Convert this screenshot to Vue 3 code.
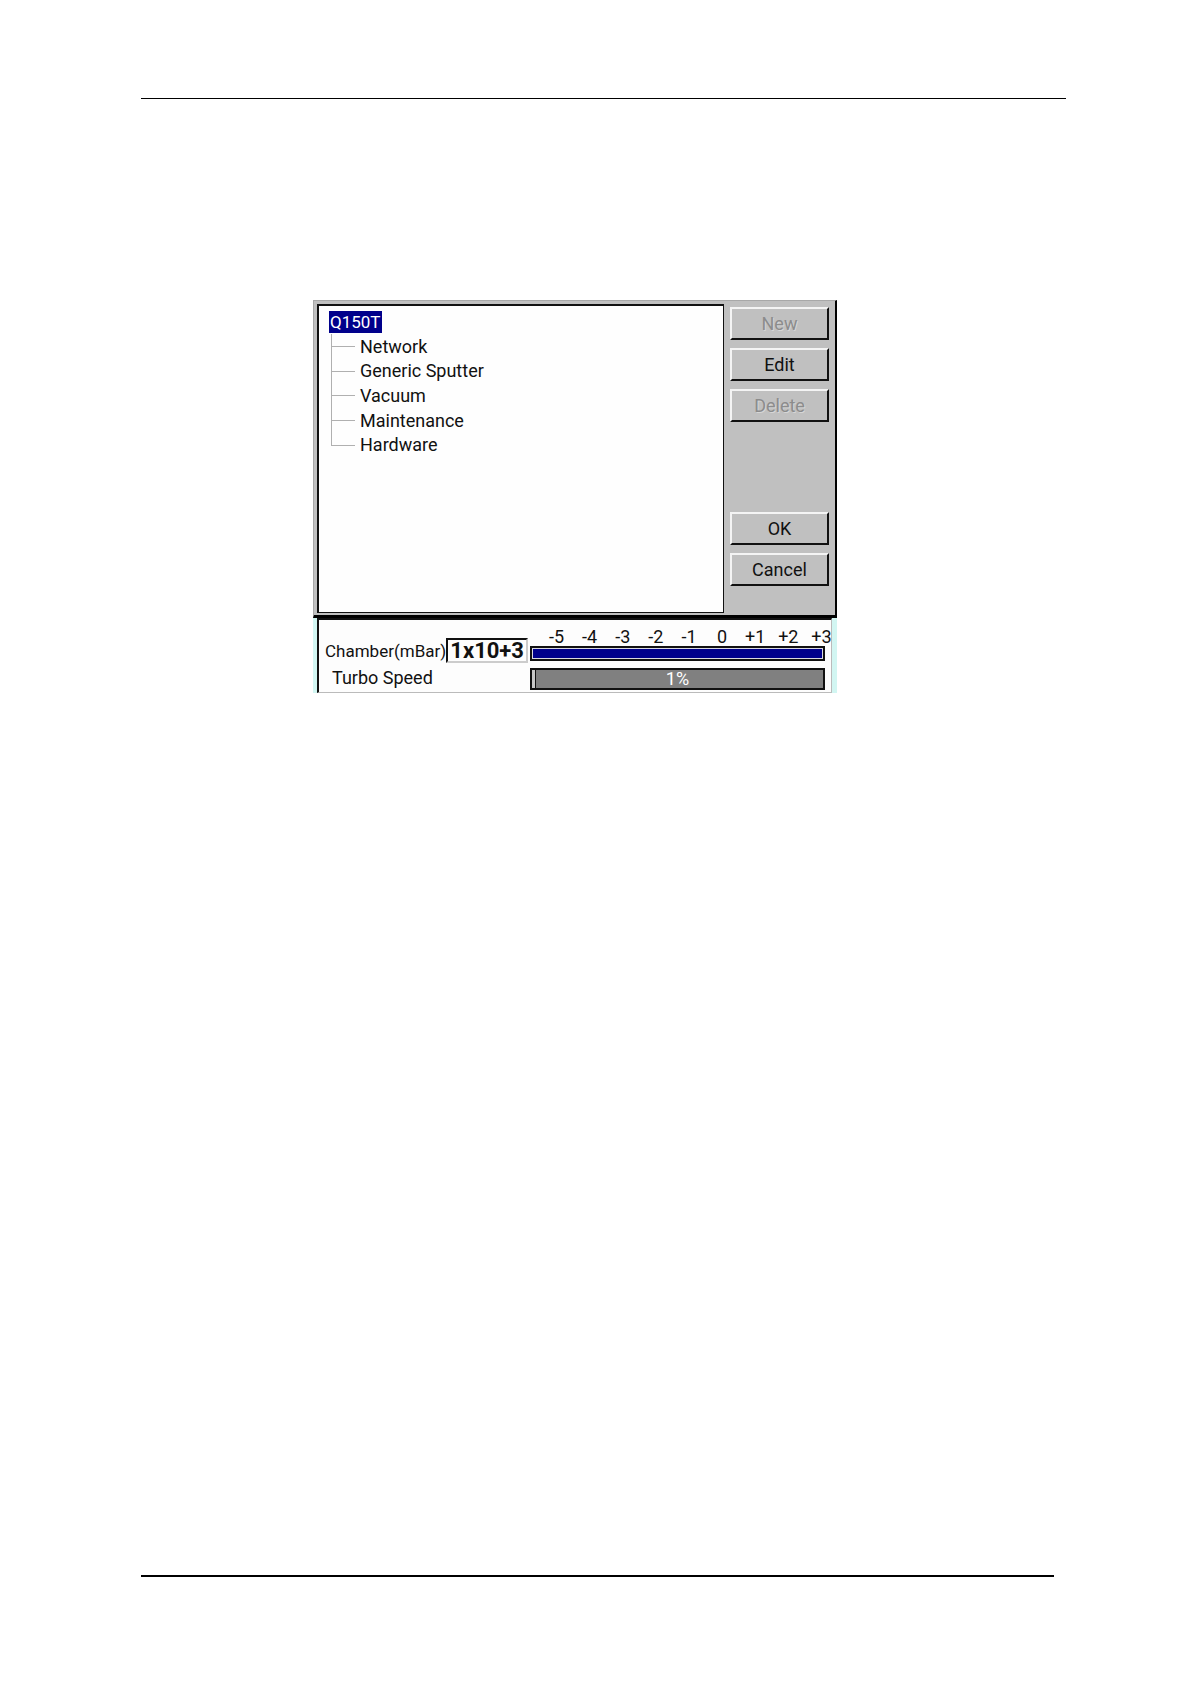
<template>
<div class="page">
<hr class="rule top" />

<div class="panel">
<div class="dialog">
<div class="tree">
<span class="root">{{ root }}</span>
<ul class="nodes">
<li v-for="node in nodes" :key="node">{{ node }}</li>
</ul>
</div>

<div class="buttons">
<button type="button" disabled>New</button>
<button type="button">Edit</button>
<button type="button" disabled>Delete</button>
<button type="button" class="ok">OK</button>
<button type="button">Cancel</button>
</div>
</div>

<div class="status">
<div class="inner">
<div class="readings">
<div class="chamber">
<label for="chamber">Chamber(mBar)</label>
<input id="chamber" type="text" v-model="pressure" readonly />
</div>
<div class="turbo">Turbo Speed</div>
</div>

<div class="gauges">
<div class="scale">
<span v-for="mark in marks" :key="mark">{{ mark }}</span>
</div>
<div class="gauge vacuum"><div class="fill" :style="{ width: vacuum + '%' }"></div></div>
<div class="gauge speed">
<div class="fill" :style="{ width: speed + '%' }"></div>
<span class="percent">{{ speed }}%</span>
</div>
</div>
</div>
</div>
</div>

<hr class="rule bottom" />
</div>
</template>

<script setup>
import { ref } from 'vue'

const root = 'Q150T'
const nodes = ['Network', 'Generic Sputter', 'Vacuum', 'Maintenance', 'Hardware']
const marks = ['-5', '-4', '-3', '-2', '-1', '0', '+1', '+2', '+3']

const pressure = ref('1x10+3')
const vacuum = ref(100)
const speed = ref(1)
</script>

<style>
body { margin:0; background:#fff }
</style>

<style scoped>
.page { box-sizing:border-box; min-height:100vh; display:flex; flex-direction:column; padding:98px 124px 107px 141px; font-family:Roboto, "Liberation Sans", Arial, sans-serif; font-size:18px; color:#111 }
.rule { width:100%; margin:0; border:0; background:#000 }
.top { height:1px }
.bottom { height:2px; width:auto; margin:auto 12px 0 0 }

.panel { width:100%; max-width:524px; margin:201px 0 40px 172px }
.dialog { display:flex; box-sizing:border-box; min-height:318px; padding:3px 6px 2px 3px; gap:6px; background:#c0c0c0; border:1px solid #a8a8a8; border-right:2px solid #000; border-bottom:3px solid #000 }
.tree { flex:1; box-sizing:border-box; padding:5px 10px; background:#fefefe; border:1px solid #111; border-width:2px 1px 1px 2px }
.root { display:inline-block; padding:0 1px; line-height:22px; font-size:17px; background:#00008b; color:#fff }

.nodes { display:grid; grid-auto-rows:1fr; height:123px; margin:1px 0 0 2px; padding:0; list-style:none }
.nodes li { position:relative; display:flex; align-items:center; padding-left:29px }
.nodes li::before { content:""; position:absolute; left:0; top:0; bottom:0; border-left:1px solid #b0b0b0 }
.nodes li:last-child::before { bottom:50% }
.nodes li::after { content:""; position:absolute; left:0; top:50%; width:24px; border-top:1px solid #b0b0b0 }

.buttons { display:flex; flex-direction:column; gap:8px; width:99px; padding-top:3px }
button { box-sizing:border-box; height:33px; padding:0; font:inherit; color:#111; background:#c0c0c0; border:2px solid; border-color:#f4f4f4 #111 #111 #f4f4f4; border-radius:0 }
button:disabled { color:#8c8c8c; text-shadow:1px 1px 0 #d6d6d6 }
.ok { margin-top:82px }

.status { padding:0 5px 0 4px; background:#d2f6f2 }
.inner { box-sizing:border-box; display:flex; gap:3px; min-height:75px; padding:0 6px 0 6px; background:#fdfdfd; border:1px solid #bbb; border-top:2px solid #111; border-left:2px solid #111 }
.readings { display:flex; flex-direction:column; width:202px }
.chamber { display:flex; align-items:center; justify-content:space-between; margin-top:18px; font-size:17px; line-height:24px; white-space:nowrap }
.chamber input { box-sizing:border-box; width:82px; height:25px; padding:0; border:2px solid; border-color:#111 #ccc #ccc #111; background:#fdfdfd; color:#111; font:bold 22px Roboto, "Liberation Sans", Arial, sans-serif; text-align:center }
.turbo { margin-top:3px; padding-left:7px; line-height:24px }

.gauges { flex:1 }
.scale { display:grid; grid-template-columns:repeat(9, 1fr); margin:8px -13px 0 10px; line-height:18px; text-align:center }
.gauge { box-sizing:border-box; border:2px solid #111 }
.vacuum { height:15px; padding:1px; background:#d8d8e0 }
.vacuum .fill { height:100%; background:#00008b }
.speed { position:relative; display:flex; height:22px; margin-top:7px; background:#808080 }
.speed .fill { background:#c8c8c8; border-right:1px solid #111 }
.percent { position:absolute; inset:0; line-height:18px; text-align:center; color:#fff }
</style>
